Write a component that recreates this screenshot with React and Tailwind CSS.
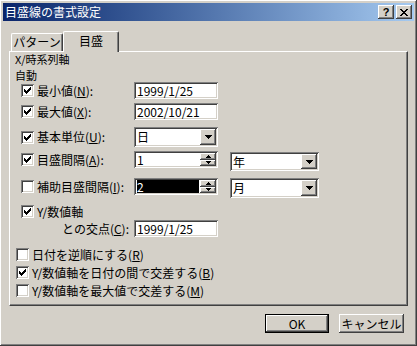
import React from 'react';

const raised = 'shadow-[inset_-1px_-1px_#404040,inset_1px_1px_#ffffff,inset_-2px_-2px_#808080,inset_2px_2px_#d4d0c8]';
const sunken = 'shadow-[inset_1px_1px_#808080,inset_-1px_-1px_#ffffff,inset_2px_2px_#404040,inset_-2px_-2px_#d4d0c8]';

function Check({ checked }) {
  return (
    <span className={`w-[13px] h-[13px] bg-white shrink-0 flex items-center justify-center ${sunken}`}>
      {checked && (
        <svg width="7" height="7" viewBox="0 0 7 7" shapeRendering="crispEdges">
          <path d="M0 2h1v3H0zM1 3h1v3H1zM2 4h1v3H2zM3 3h1v3H3zM4 2h1v3H4zM5 1h1v3H5zM6 0h1v3H6z" fill="#000" />
        </svg>
      )}
    </span>
  );
}

function Arrow() {
  return (
    <svg width="7" height="4" viewBox="0 0 7 4" shapeRendering="crispEdges">
      <path d="M0 0h7v1H0zM1 1h5v1H1zM2 2h3v1H2zM3 3h1v1H3z" fill="#000" />
    </svg>
  );
}

function TextBox({ value }) {
  return (
    <div className={`h-[17px] w-[84px] bg-white pl-[3px] flex items-center ${sunken}`}>{value}</div>
  );
}

function Combo({ value, w = 84, h = 20 }) {
  return (
    <div className={`bg-white p-[2px] flex items-stretch ${sunken}`} style={{ width: w, height: h }}>
      <span className="flex-1 pl-[1px] flex items-center">{value}</span>
      <span className={`w-[16px] bg-[#d4d0c8] flex items-center justify-center ${raised}`}>
        <Arrow />
      </span>
    </div>
  );
}

function Spin({ value, selected }) {
  return (
    <div className={`h-[17px] w-[84px] bg-white p-[2px] flex items-stretch ${sunken}`}>
      <span className="flex-1 pl-[1px] flex items-stretch pr-[1px]">
        {selected ? (
          <span className="flex-1 bg-black text-white flex items-center">{value}</span>
        ) : (
          <span className="flex items-center">{value}</span>
        )}
      </span>
      <span className="w-[16px] flex flex-col">
        <span className={`flex-1 bg-[#d4d0c8] flex items-center justify-center ${raised}`}>
          <svg width="5" height="3" viewBox="0 0 5 3" shapeRendering="crispEdges">
            <path d="M2 0h1v1H2zM1 1h3v1H1zM0 2h5v1H0z" fill="#000" />
          </svg>
        </span>
        <span className={`flex-1 bg-[#d4d0c8] flex items-center justify-center ${raised}`}>
          <svg width="5" height="3" viewBox="0 0 5 3" shapeRendering="crispEdges">
            <path d="M0 0h5v1H0zM1 1h3v1H1zM2 2h1v1H2z" fill="#000" />
          </svg>
        </span>
      </span>
    </div>
  );
}

function CheckLabel({ checked, children }) {
  return (
    <div className="w-[113px] flex items-center gap-[3px]">
      <Check checked={checked} />
      <span className="whitespace-nowrap">{children}</span>
    </div>
  );
}

export default function App() {
  return (
    <div className={`w-[417px] h-[346px] bg-[#d4d0c8] p-[3px] flex flex-col text-[12px] leading-[14px] text-black font-['Noto_Sans_CJK_JP',sans-serif] ${raised}`}>
      {/* title bar */}
      <div className="h-[18px] flex items-center justify-between pl-[2px] pr-[2px] bg-gradient-to-r from-[#0a246a] to-[#a6caf0]">
        <span className="text-white">目盛線の書式設定</span>
        <div className="flex gap-[2px]">
          <span className={`w-[16px] h-[14px] bg-[#d4d0c8] flex items-center justify-center font-bold text-[11px] leading-none font-['Liberation_Sans',sans-serif] ${raised}`}>?</span>
          <span className={`w-[16px] h-[14px] bg-[#d4d0c8] flex items-center justify-center ${raised}`}>
            <svg width="8" height="7" viewBox="0 0 8 7" shapeRendering="crispEdges">
              <path d="M0 0h2v1H0zM6 0h2v1H6zM1 1h2v1H1zM5 1h2v1H5zM2 2h4v1H2zM3 3h2v1H3zM2 4h4v1H2zM1 5h2v1H1zM5 5h2v1H5zM0 6h2v1H0zM6 6h2v1H6z" fill="#000" />
            </svg>
          </span>
        </div>
      </div>

      {/* tabs */}
      <div className="mt-[10px] mx-[6px] h-[20px] flex items-end pl-[2px]">
        <div className="w-[52px] h-[18px] flex items-center justify-center border-t border-l border-t-white border-l-white border-r border-r-[#404040] rounded-tl-[2px] rounded-tr-[2px] shadow-[inset_-1px_0_#808080] pb-[1px]">
          パターン
        </div>
        <div className="relative z-10 w-[56px] h-[21px] -mb-px bg-[#d4d0c8] flex items-center justify-center border-t border-l border-t-white border-l-white border-r border-r-[#404040] rounded-tl-[2px] rounded-tr-[2px] shadow-[inset_-1px_0_#808080] pb-[3px]">
          目盛
        </div>
      </div>

      {/* panel */}
      <div className="mx-[6px] h-[255px] border border-t-white border-l-white border-r-[#404040] border-b-[#404040] shadow-[inset_-1px_-1px_#808080] flex flex-col">
        <div className="ml-[5px] -mt-px h-[16px] text-[11px] leading-[16px]">X/時系列軸</div>
        <div className="ml-[5px] h-[16px] text-[11px] leading-[16px]">自動</div>

        <div className="ml-[11px] -mt-px flex items-center">
          <CheckLabel checked>最小値(<u>N</u>):</CheckLabel>
          <TextBox value="1999/1/25" />
        </div>
        <div className="ml-[11px] mt-[4px] flex items-center">
          <CheckLabel checked>最大値(<u>X</u>):</CheckLabel>
          <TextBox value="2002/10/21" />
        </div>
        <div className="ml-[11px] mt-[7px] flex items-center">
          <CheckLabel checked>基本単位(<u>U</u>):</CheckLabel>
          <Combo value="日" />
        </div>
        <div className="ml-[11px] mt-[4px] flex items-start">
          <div className="h-[17px] flex items-center">
            <CheckLabel checked>目盛間隔(<u>A</u>):</CheckLabel>
          </div>
          <Spin value="1" />
          <div className="ml-[12px] mt-[1px]">
            <Combo value="年" w={89} h={19} />
          </div>
        </div>
        <div className="ml-[11px] mt-[7px] flex items-start">
          <div className="h-[17px] flex items-center">
            <CheckLabel>補助目盛間隔(<u>I</u>):</CheckLabel>
          </div>
          <Spin value="2" selected />
          <div className="ml-[12px]">
            <Combo value="月" w={89} h={20} />
          </div>
        </div>
        <div className="ml-[11px] mt-[7px] h-[13px] flex items-center gap-[3px]">
          <Check checked />
          <span>Y/数値軸</span>
        </div>
        <div className="ml-[52px] mt-[2px] flex items-center">
          <span className="w-[72px] whitespace-nowrap">との交点(<u>C</u>):</span>
          <TextBox value="1999/1/25" />
        </div>

        <div className="ml-[6px] mt-[11px] h-[13px] flex items-center gap-[3px]">
          <Check />
          <span>日付を逆順にする(<u>R</u>)</span>
        </div>
        <div className="ml-[6px] mt-[5px] h-[13px] flex items-center gap-[3px]">
          <Check checked />
          <span>Y/数値軸を日付の間で交差する(<u>B</u>)</span>
        </div>
        <div className="ml-[6px] mt-[5px] h-[13px] flex items-center gap-[3px]">
          <Check />
          <span>Y/数値軸を最大値で交差する(<u>M</u>)</span>
        </div>
      </div>

      {/* buttons */}
      <div className="mt-[8px] flex justify-end gap-[10px] pr-[10px]">
        <div className="w-[64px] h-[19px] border border-black">
          <div className={`w-full h-full bg-[#d4d0c8] flex items-center justify-center ${raised}`}>OK</div>
        </div>
        <div className={`w-[65px] h-[19px] bg-[#d4d0c8] flex items-center justify-center ${raised}`}>キャンセル</div>
      </div>
    </div>
  );
}
